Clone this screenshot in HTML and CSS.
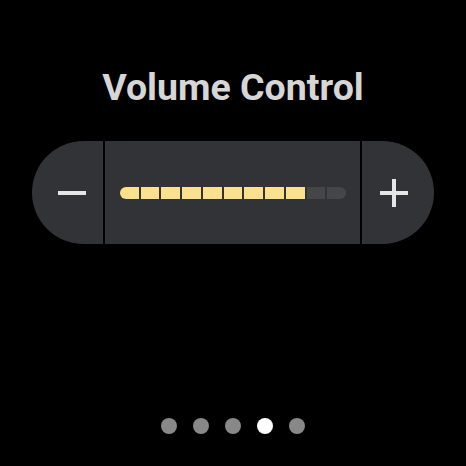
FILE: index.html
```html
<!DOCTYPE html>
<html>
<head>
<meta charset="utf-8">
<link rel="stylesheet" href="styles.css">
</head>
<body>
<div class="screen">
  <h1 class="title">Volume Control</h1>
  <div class="control">
    <div class="btn btn-minus">
      <svg width="28" height="4" viewBox="0 0 28 4"><rect x="0" y="0" width="28" height="4" fill="#e6e6e6"/></svg>
    </div>
    <div class="middle">
      <div class="bar">
        <span class="seg on first"></span>
        <span class="seg on"></span>
        <span class="seg on"></span>
        <span class="seg on"></span>
        <span class="seg on"></span>
        <span class="seg on"></span>
        <span class="seg on"></span>
        <span class="seg on"></span>
        <span class="seg on"></span>
        <span class="seg"></span>
        <span class="seg last"></span>
      </div>
    </div>
    <div class="btn btn-plus">
      <svg width="28" height="28" viewBox="0 0 28 28"><rect x="0" y="12" width="28" height="4" fill="#e6e6e6"/><rect x="12" y="0" width="4" height="28" fill="#e6e6e6"/></svg>
    </div>
  </div>
  <div class="dots">
    <span class="dot"></span>
    <span class="dot"></span>
    <span class="dot"></span>
    <span class="dot active"></span>
    <span class="dot"></span>
  </div>
</div>
</body>
</html>
```
FILE: styles.css
```css
html, body {
  margin: 0;
  padding: 0;
  background: #000;
}
.screen {
  width: 466px;
  height: 466px;
  display: flex;
  flex-direction: column;
  align-items: center;
  padding-top: 66px;
  box-sizing: border-box;
  font-family: Roboto, "Liberation Sans", sans-serif;
}
.title {
  margin: 0;
  font-size: 37.5px;
  line-height: 42px;
  font-weight: 700;
  color: #d6d6d6;
}
.control {
  margin-top: 33px;
  width: 402px;
  height: 103px;
  display: flex;
  gap: 2px;
}
.btn {
  background: #323336;
  display: flex;
  align-items: center;
  justify-content: center;
}
.btn svg { display: block; }
.btn-minus {
  width: 71px;
  border-radius: 52px 0 0 52px;
  padding-left: 9px;
  box-sizing: border-box;
}
.btn-plus {
  width: 72px;
  border-radius: 0 52px 52px 0;
  padding-right: 8px;
  box-sizing: border-box;
}
.middle {
  flex: 1;
  background: #323336;
  display: flex;
  align-items: center;
  padding-left: 15px;
  padding-right: 14px;
  padding-top: 1px;
}
.bar {
  flex: 1;
  height: 12px;
  display: flex;
  gap: 2px;
}
.seg {
  flex: 1;
  background: #454648;
}
.seg.on {
  background: #fde08c;
}
.seg.first {
  border-radius: 6px 0 0 6px;
}
.seg.last {
  border-radius: 0 6px 6px 0;
}
.dots {
  margin-top: 174px;
  display: flex;
  gap: 16px;
}
.dot {
  width: 16px;
  height: 16px;
  border-radius: 50%;
  background: #888888;
}
.dot.active {
  background: #ffffff;
}
```
